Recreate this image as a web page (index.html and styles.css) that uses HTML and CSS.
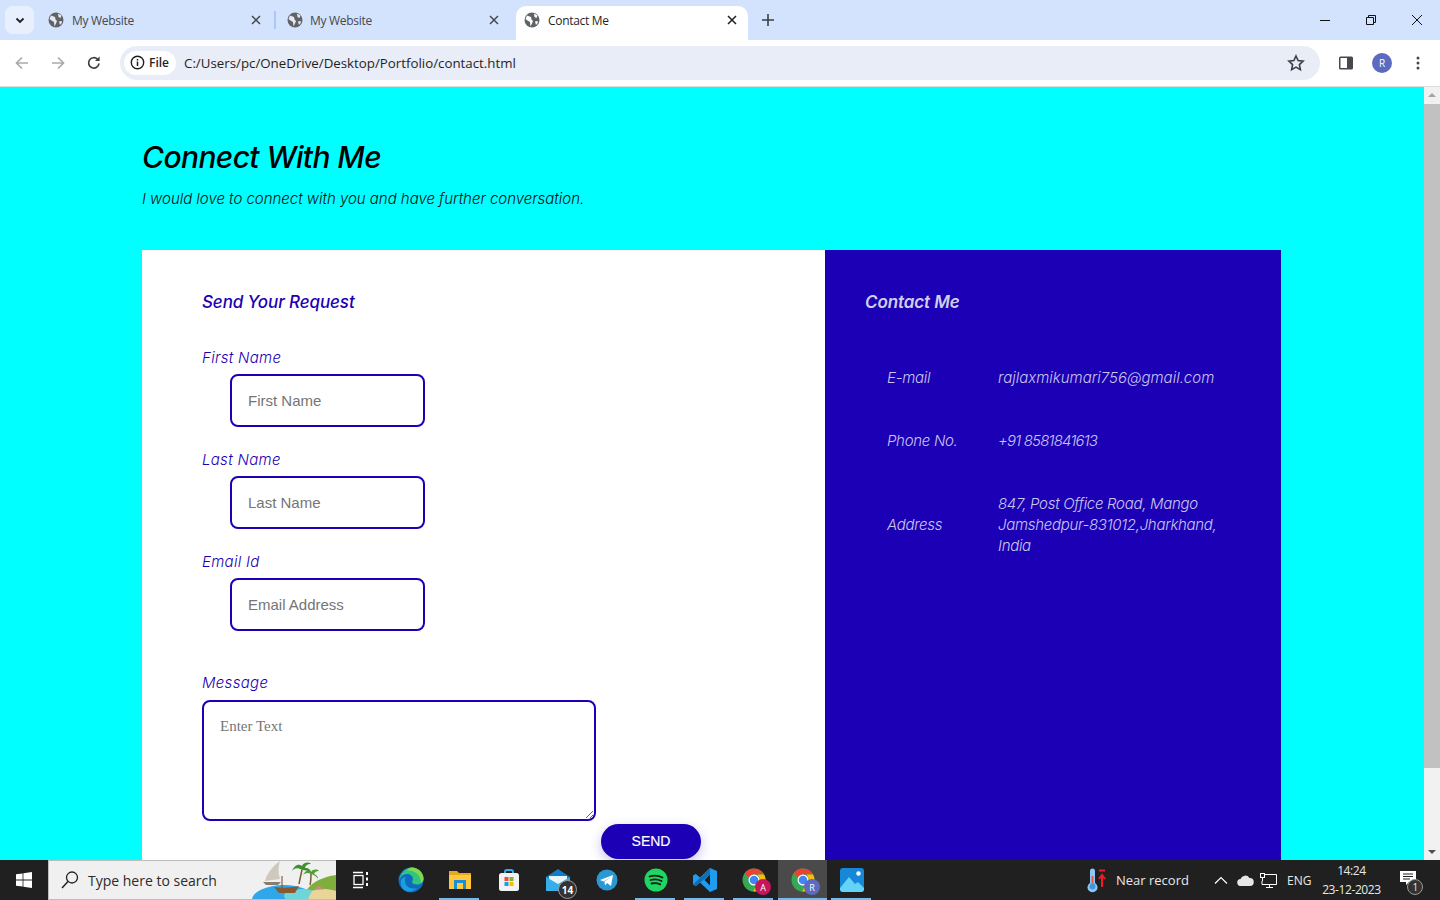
FILE: index.html
```html
<!DOCTYPE html>
<html lang="en">
<head>
    <meta charset="UTF-8">
    <meta name="viewport" content="width=device-width, initial-scale=1.0">
    <title>Contact Me</title>
    <link rel="stylesheet" href="styles.css">
</head>
<body>
    <!-- Tab strip -->
    <div class="tabstrip">
        <div class="tab-search">
            <svg width="12" height="12" viewBox="0 0 12 12"><path d="M2.5 4.5 6 8l3.5-3.5" fill="none" stroke="#1f1f1f" stroke-width="1.8"/></svg>
        </div>
        <div class="tab">
            <svg class="globe" width="16" height="16" viewBox="0 0 16 16"><circle cx="8" cy="8" r="7.5" fill="#5f6368"/><path d="M3 3.5 7 5l.5 2.5L9 9l-1 2.5-1.5 3L6 10 3.5 8.5 1.5 7zM10 1.5l3.5 2-1 2.5-2-1zM11 9.5l2.5-.5.5 1.5-2 2.5z" fill="#e6e9ef"/></svg>
            <span class="tab-title">My Website</span>
            <svg class="tab-x" width="10" height="10" viewBox="0 0 10 10"><path d="M1 1l8 8M9 1l-8 8" stroke="#45484d" stroke-width="1.5"/></svg>
        </div>
        <div class="tab-sep"></div>
        <div class="tab tab-second">
            <svg class="globe" width="16" height="16" viewBox="0 0 16 16"><circle cx="8" cy="8" r="7.5" fill="#5f6368"/><path d="M3 3.5 7 5l.5 2.5L9 9l-1 2.5-1.5 3L6 10 3.5 8.5 1.5 7zM10 1.5l3.5 2-1 2.5-2-1zM11 9.5l2.5-.5.5 1.5-2 2.5z" fill="#e6e9ef"/></svg>
            <span class="tab-title">My Website</span>
            <svg class="tab-x" width="10" height="10" viewBox="0 0 10 10"><path d="M1 1l8 8M9 1l-8 8" stroke="#45484d" stroke-width="1.5"/></svg>
        </div>
        <div class="tab tab-active">
            <svg class="globe" width="16" height="16" viewBox="0 0 16 16"><circle cx="8" cy="8" r="7.5" fill="#5f6368"/><path d="M3 3.5 7 5l.5 2.5L9 9l-1 2.5-1.5 3L6 10 3.5 8.5 1.5 7zM10 1.5l3.5 2-1 2.5-2-1zM11 9.5l2.5-.5.5 1.5-2 2.5z" fill="#fff"/></svg>
            <span class="tab-title">Contact Me</span>
            <svg class="tab-x" width="10" height="10" viewBox="0 0 10 10"><path d="M1 1l8 8M9 1l-8 8" stroke="#1f1f1f" stroke-width="1.5"/></svg>
        </div>
        <svg class="tab-new" width="12" height="12" viewBox="0 0 12 12"><path d="M6 0v12M0 6h12" stroke="#3c4043" stroke-width="1.6"/></svg>
        <div class="win-controls">
            <svg width="46" height="12" viewBox="0 0 46 12"><path d="M18 6.5h10" stroke="#111" stroke-width="1"/></svg>
            <svg width="46" height="12" viewBox="0 0 46 12"><path d="M18.5 3.5h7v7h-7zM20.5 3.5v-2h7v7h-2" fill="none" stroke="#111"/></svg>
            <svg width="46" height="12" viewBox="0 0 46 12"><path d="M18 1l10 10M28 1 18 11" stroke="#111" stroke-width="1"/></svg>
        </div>
    </div>

    <!-- Toolbar -->
    <div class="toolbar">
        <svg class="nav-icon" width="16" height="16" viewBox="0 0 16 16"><path d="M14 8H2.5M8 2.5 2.5 8 8 13.5" fill="none" stroke="#a9abae" stroke-width="1.7"/></svg>
        <svg class="nav-icon" width="16" height="16" viewBox="0 0 16 16"><path d="M2 8h11.5M8 2.5 13.5 8 8 13.5" fill="none" stroke="#a9abae" stroke-width="1.7"/></svg>
        <svg class="nav-icon" width="16" height="16" viewBox="0 0 16 16"><path d="M13 8.5A5.2 5.2 0 1 1 11.5 4.2" fill="none" stroke="#3c4043" stroke-width="1.7"/><path d="M13.6 1.5v4.6H9z" fill="#3c4043"/></svg>
        <div class="omnibox">
            <div class="chip">
                <svg width="15" height="15" viewBox="0 0 15 15"><circle cx="7.5" cy="7.5" r="6.2" fill="none" stroke="#1f1f1f" stroke-width="1.4"/><path d="M7.5 6.5v4.5M7.5 4v1.6" stroke="#1f1f1f" stroke-width="1.5"/></svg>
                <span>File</span>
            </div>
            <span class="url">C:/Users/pc/OneDrive/Desktop/Portfolio/contact.html</span>
            <svg class="star" width="18" height="18" viewBox="0 0 18 18"><path d="m9 2 2.1 4.6 5 .6-3.7 3.4 1 5L9 13.1l-4.4 2.5 1-5L1.900 7.200l5-.6z" fill="none" stroke="#3c4043" stroke-width="1.6"/></svg>
        </div>
        <svg class="side-icon" width="16" height="16" viewBox="0 0 16 16"><rect x="1" y="1.500" width="14" height="13" rx="1.500" fill="#45484d"/><rect x="2.500" y="3" width="6.500" height="10" fill="#fff"/></svg>
        <div class="avatar">R</div>
        <svg class="dots" width="4" height="14" viewBox="0 0 4 14"><circle cx="2" cy="2" r="1.500" fill="#45484d"/><circle cx="2" cy="7" r="1.500" fill="#45484d"/><circle cx="2" cy="12" r="1.500" fill="#45484d"/></svg>
    </div>

    <!-- Page -->
    <div class="viewport">
        <main class="page">
            <h1>Connect With Me</h1>
            <p class="intro">I would love to connect with you and have further conversation.</p>

            <div class="card">
                <section class="form-panel">
                    <h2>Send Your Request</h2>
                    <form>
                        <label for="first">First Name</label>
                        <input id="first" type="text" placeholder="First Name">
                        <label for="last">Last Name</label>
                        <input id="last" type="text" placeholder="Last Name">
                        <label for="email">Email Id</label>
                        <input id="email" type="text" placeholder="Email Address">
                        <label class="message-label" for="message">Message</label>
                        <div class="message-row">
                            <textarea id="message" placeholder="Enter Text"></textarea>
                            <button type="button" class="send">SEND</button>
                        </div>
                    </form>
                </section>
                <aside class="info-panel">
                    <h2>Contact Me</h2>
                    <div class="info-table">
                        <span>E-mail</span>
                        <span class="val-email">rajlaxmikumari756@gmail.com</span>
                        <span>Phone No.</span>
                        <span class="val-phone">+91 8581841613</span>
                        <span>Address</span>
                        <span>847, Post Office Road, Mango<br>Jamshedpur-831012,Jharkhand,<br>India</span>
                    </div>
                </aside>
            </div>
        </main>
        <div class="scrollbar">
            <div class="arrow-up"></div>
            <div class="track"><div class="thumb"></div></div>
            <div class="arrow-down"></div>
        </div>
    </div>

    <!-- Taskbar -->
    <footer class="taskbar">
        <div class="start">
            <svg width="16" height="16" viewBox="0 0 16 16"><path d="M0 2.300 6.600 1.400v6.200H0zM7.400 1.300 16 0v7.600H7.400zM0 8.400h6.600v6.200L0 13.700zM7.400 8.400H16V16l-8.600-1.300z" fill="#fff"/></svg>
        </div>
        <div class="search">
            <svg width="20" height="20" viewBox="0 0 20 20"><circle cx="12" cy="7.500" r="5.500" fill="none" stroke="#222" stroke-width="1.300"/><path d="M8 11.500 2 18" stroke="#222" stroke-width="1.500"/></svg>
            <span>Type here to search</span>
            <svg class="scene" width="84" height="39" viewBox="0 0 84 39">
                <path d="M50 39c4-14 18-22 34-24v24z" fill="#7fae3f"/>
                <ellipse cx="32" cy="40" rx="32" ry="15" fill="#2fa7e8"/>
                <ellipse cx="50" cy="36" rx="18" ry="7" fill="#6ed6d8"/>
                <path d="M60 31c4-2 14-3 24 0v8H56z" fill="#e9d49a"/>
                <path d="M28 1c-7 5-13 12-15 20l15-2c-2-6-2-12 0-18z" fill="#cfc9bd"/>
                <path d="M11 22h18l-3 3H14z" fill="#8a7d6c"/>
                <path d="M30 16v12" stroke="#6b4a2b"/>
                <path d="M22 27c8 1 15 1 25-1l-4 7H27z" fill="#8a5a2e"/>
                <path d="M47 24c1-5 2-10 3-14M58 25c1-4 1-9 1-12" stroke="#7a5a30" stroke-width="1.500" fill="none"/>
                <path d="M50 10c-4-3-8-2-10 1 2-5 6-8 10-5 1-3 6-5 9-2-4 0-5 1-6 4 4 0 6 2 6 5-2-2-5-3-9-3z" fill="#3f8f2f"/>
                <path d="M59 14c-3-2-6-1-8 1 2-4 5-6 8-3 2-3 6-3 8-1-3 0-4 1-5 3 3 1 4 3 4 5-2-3-4-4-7-5z" fill="#4f9f35"/>
                <path d="M62 29l5-3 5 3-1 .5H63z" fill="#c98d7b"/>
            </svg>
        </div>
        <div class="task-icons">
            <div class="task-slot task-view">
                <svg width="18" height="18" viewBox="0 0 18 18" fill="none" stroke="#fff" stroke-width="1.300"><path d="M1 1.500h10M1 16.500h10"/><rect x="2" y="4.500" width="9" height="9"/><path d="M15 1v3M15 6.500v3M15 12v3" stroke-width="2"/></svg>
            </div>
            <div class="task-slot">
                <svg width="26" height="26" viewBox="0 0 26 26"><circle cx="13" cy="13" r="12.500" fill="#0f6cbd"/><path d="M1 14C2 6 8 .5 14 .5c6 0 11.500 5 11.500 11 0 4-3 6-6.500 6-3 0-5-1-5-2.500 0-1 1-1.500 1-3 0-3-3-5-6-5C5 7 2 10 1 14z" fill="#33c481"/><path d="M14 .5c6 0 11.500 5 11.500 11 0 2-1 3.500-2.500 4.500 0-7-5-13-14-12.500C10 2 12 .5 14 .5z" fill="#7ddb4f"/><path d="M7 14c0 5 5 9 12 7-3 3-7 4.500-11 3C4 22.500 2 18 3 13c1-2 3-3 5-3-1 1-1 2.500-1 4z" fill="#1b9de2"/></svg>
            </div>
            <div class="task-slot running">
                <svg width="22" height="20" viewBox="0 0 22 20"><path d="M0 1h8l2 2h12v3H0z" fill="#e8a820"/><rect y="5" width="22" height="14" fill="#ffc83d"/><rect x="5" y="10" width="12" height="9" fill="#1a8fd6"/><rect x="8" y="13" width="6" height="6" fill="#ffc83d"/></svg>
            </div>
            <div class="task-slot">
                <svg width="24" height="24" viewBox="0 0 24 24"><path d="M8 7V4a2 2 0 0 1 2-2h4a2 2 0 0 1 2 2v3" fill="none" stroke="#2fb0ea" stroke-width="2"/><rect x="2" y="5" width="20" height="18" rx="2.500" fill="#f3f3f3"/><rect x="7.500" y="9" width="4" height="4" fill="#e8512b"/><rect x="12.500" y="9" width="4" height="4" fill="#7db72f"/><rect x="7.500" y="14" width="4" height="4" fill="#1ba1e2"/><rect x="12.500" y="14" width="4" height="4" fill="#ffb900"/></svg>
            </div>
            <div class="task-slot">
                <svg width="24" height="22" viewBox="0 0 24 22"><path d="M0 8 12 0l12 8v13H0z" fill="#0f7cc7"/><path d="M3 7h18v7l-9 5-9-5z" fill="#e8f4fb"/><path d="M0 8l12 7 12-7v14H0z" fill="#35aeea"/></svg>
                <span class="count-badge">14</span>
            </div>
            <div class="task-slot">
                <svg width="22" height="22" viewBox="0 0 22 22"><circle cx="11" cy="11" r="10.500" fill="#2a98d4"/><path d="M4 11l13-5-2 11-4-3-2 2.500-.5-4L15 8l-7.500 4.500z" fill="#fff"/></svg>
            </div>
            <div class="task-slot running">
                <svg width="24" height="24" viewBox="0 0 24 24"><circle cx="12" cy="12" r="11.500" fill="#1ed760"/><path d="M5.500 8.500c4.500-1.300 9-1 13 1M6.500 12c4-1 7.500-.8 11 1M7.500 15.500c3-.7 6-.6 8.800.9" fill="none" stroke="#1a1a1a" stroke-width="1.800" stroke-linecap="round"/></svg>
            </div>
            <div class="task-slot running">
                <svg width="24" height="24" viewBox="0 0 24 24"><path d="M17 0 24 3v18l-7 3L7 14.500 2.800 18 0 16.500V7.500L2.800 6 7 9.500zM17 6.500 11.500 12l5.500 5.500z" fill="#1f9cf0"/><path d="M17 0v6.500L3 18l-3-1.500z" fill="#0f6fb8"/></svg>
            </div>
            <div class="task-slot running">
                <svg class="chrome" width="24" height="24" viewBox="0 0 24 24"><circle cx="12" cy="12" r="11.500" fill="#34a853"/><path d="M12 .5A11.500 11.500 0 0 1 22 6.500H12A5.500 5.500 0 0 0 7 9.500L2.500 5.500A11.500 11.500 0 0 1 12 .5z" fill="#ea4335"/><path d="M22 6.500A11.500 11.500 0 0 1 11 23.500l5-9a5.500 5.500 0 0 0-.5-8z" fill="#fbbc04"/><circle cx="12" cy="12" r="5.500" fill="#fff"/><circle cx="12" cy="12" r="4.300" fill="#4285f4"/></svg>
                <span class="profile-badge badge-a">A</span>
            </div>
            <div class="task-slot running active">
                <svg class="chrome" width="24" height="24" viewBox="0 0 24 24"><circle cx="12" cy="12" r="11.500" fill="#34a853"/><path d="M12 .5A11.500 11.500 0 0 1 22 6.500H12A5.500 5.500 0 0 0 7 9.500L2.500 5.500A11.500 11.500 0 0 1 12 .5z" fill="#ea4335"/><path d="M22 6.500A11.500 11.500 0 0 1 11 23.500l5-9a5.500 5.500 0 0 0-.5-8z" fill="#fbbc04"/><circle cx="12" cy="12" r="5.500" fill="#fff"/><circle cx="12" cy="12" r="4.300" fill="#4285f4"/></svg>
                <span class="profile-badge badge-r">R</span>
            </div>
            <div class="task-slot running">
                <svg width="24" height="24" viewBox="0 0 24 24"><rect width="24" height="24" rx="3" fill="#1787d8"/><path d="M0 20 9 9l6 7 3-2 6 6v1a3 3 0 0 1-3 3H3a3 3 0 0 1-3-3z" fill="#63d4f7"/><circle cx="18.500" cy="5.500" r="2.200" fill="#fff"/></svg>
            </div>
        </div>
        <div class="tray">
            <svg class="tray-temp" width="20" height="26" viewBox="0 0 20 26"><path d="M4 4a2.500 2.500 0 0 1 5 0v12a5 5 0 1 1-5 0z" fill="#8ec8f2"/><path d="M6.500 9v9" stroke="#e8554e" stroke-width="2"/><circle cx="6.500" cy="19.500" r="3" fill="#3f97dd"/><path d="M13 3.500h6M16 20V9M13 12l3-4 3 4" fill="none" stroke="#ee1c25" stroke-width="2"/></svg>
            <span class="tray-text">Near record</span>
            <svg class="tray-chev" width="14" height="8" viewBox="0 0 14 8"><path d="M1 7.500l6-6 6 6" fill="none" stroke="#fff" stroke-width="1.200"/></svg>
            <svg class="tray-cloud" width="17" height="11" viewBox="0 0 17 11"><path d="M4 11a3.500 3.500 0 0 1-.5-7A5 5 0 0 1 12.500 3 4 4 0 0 1 13 11z" fill="#e6e6e6"/></svg>
            <svg class="tray-net" width="17" height="15" viewBox="0 0 17 15" fill="none" stroke="#fff"><path d="M4.500 1.500h12v10H2V8"/><path d="M6 14.500h7M9.500 11.500v3"/><rect x=".5" y=".5" width="4" height="4"/><path d="M2.500 4.500V8"/></svg>
            <span class="tray-lang">ENG</span>
            <div class="clock"><span>14:24</span><span>23-12-2023</span></div>
            <div class="notif">
                <svg width="16" height="14" viewBox="0 0 16 14"><path d="M0 0h16v11H9l-3 3v-3H0z" fill="#fff"/><path d="M3 3h10M3 5.500h10M3 8h7" stroke="#202020"/></svg>
                <span class="notif-badge">1</span>
            </div>
        </div>
    </footer>
</body>
</html>
```

FILE: styles.css
```css
/* Global Reset */
* {
    margin: 0;
    padding: 0;
    box-sizing: border-box;
}

body {
    width: 1440px;
    height: 900px;
    overflow: hidden;
    display: flex;
    flex-direction: column;
    font-family: 'Open Sans', 'Noto Sans', sans-serif;
    background: #fff;
}

/* Tab strip */
.tabstrip {
    height: 40px;
    background: #d3e3fd;
    display: flex;
    align-items: flex-end;
    position: relative;
    flex-shrink: 0;
}

.tab-search {
    width: 29px;
    height: 28px;
    margin: 0 0 6px 5px;
    border-radius: 8px;
    background: #e8f0fe;
    display: flex;
    align-items: center;
    justify-content: center;
}

.tab {
    width: 232px;
    height: 34px;
    display: flex;
    align-items: center;
    padding: 0 5px 6px 14px;
    font-size: 12px;
    letter-spacing: -0.3px;
    color: #45484d;
}

.tab-second {
    padding-left: 11px;
    width: 240px;
    padding-right: 17px;
}

.tab-second .tab-title {
    margin-left: 7px;
}

.tab-title {
    margin-left: 8px;
    flex: 1;
}

.tab-x {
    flex-shrink: 0;
}

.tab-sep {
    width: 2px;
    height: 18px;
    margin: 0 0 11px 8px;
    background: #a8c7fa;
}

.tab-active {
    background: #fff;
    border-radius: 10px 10px 0 0;
    padding: 0 11px 6px 8px;
    color: #1f1f1f;
}

.tab-new {
    margin: 0 0 14px 14px;
}

.win-controls {
    margin-left: auto;
    display: flex;
    align-self: flex-start;
    padding-top: 14px;
}

/* Toolbar */
.toolbar {
    height: 47px;
    padding: 6px 0 7px;
    background: #fff;
    border-bottom: 1px solid #dadce0;
    border-radius: 10px 10px 0 0;
    display: flex;
    align-items: center;
    flex-shrink: 0;
}

.nav-icon {
    margin-left: 20px;
}

.nav-icon:first-child {
    margin-left: 14px;
}

.omnibox {
    width: 1200px;
    height: 34px;
    margin-left: 18px;
    border-radius: 17px;
    background: #e9edf7;
    display: flex;
    align-items: center;
    padding-left: 4px;
    padding-right: 15px;
    font-size: 13.3px;
    color: #1f1f1f;
}

.chip {
    width: 52px;
    height: 24px;
    border-radius: 12px;
    background: #fff;
    display: flex;
    align-items: center;
    gap: 4px;
    padding-left: 6px;
    font-size: 12px;
    font-weight: 600;
}

.url {
    margin-left: 8px;
    flex: 1;
}

.side-icon {
    margin-left: 18px;
}

.avatar {
    width: 20px;
    height: 20px;
    margin-left: 18px;
    border-radius: 50%;
    background: #5c6bc0;
    color: #fff;
    font-size: 10px;
    display: flex;
    align-items: center;
    justify-content: center;
}

.dots {
    margin-left: 24px;
}

/* Page viewport */
.viewport {
    flex: 1;
    min-height: 0;
    display: flex;
}

.page {
    width: 1424px;
    height: 773px;
    background: #00ffff;
    padding: 49px 0 0 142px;
    overflow: hidden;
    font-style: italic;
}

h1 {
    font-size: 30px;
    line-height: 42px;
    font-weight: 500;
    font-family: 'Inter', sans-serif;
    letter-spacing: -0.6px;
    color: #000;
}

.intro {
    margin-top: 10px;
    font-size: 15px;
    line-height: 22px;
    font-family: 'Inter', sans-serif;
    font-weight: 300;
    color: #111;
    letter-spacing: -0.03px;
}

.card {
    width: 1139px;
    height: 700px;
    margin-top: 40px;
    display: flex;
    font-family: 'Inter', sans-serif;
}

/* Form panel */
.form-panel {
    width: 683px;
    background: #fff;
    padding: 40px 0 0 60px;
    color: #1c00b5;
}

h2 {
    font-size: 17px;
    line-height: 24px;
    font-weight: 500;
    letter-spacing: -0.1px;
}

form {
    margin-top: 33px;
}

label {
    display: block;
    font-size: 15px;
    line-height: 22px;
    font-weight: 300;
    letter-spacing: 0.3px;
}

input {
    display: block;
    width: 195px;
    height: 53px;
    margin: 5px 0 22px 28px;
    padding: 0 16px;
    border: 2px solid #1c00b5;
    border-radius: 8px;
    font-family: 'Liberation Sans', Arial, sans-serif;
    font-size: 15px;
    outline: none;
}

.message-label {
    margin-top: 41px;
}

.message-row {
    display: flex;
    align-items: flex-start;
    margin-top: 6px;
}

textarea {
    display: block;
    width: 394px;
    height: 121px;
    padding: 16px;
    border: 2px solid #1c00b5;
    border-radius: 8px;
    font-family: 'Liberation Serif', 'Times New Roman', serif;
    font-size: 15px;
    outline: none;
}

.send {
    width: 100px;
    height: 35px;
    margin: 124px 0 0 5px;
    padding-bottom: 1px;
    border: none;
    border-radius: 18px;
    background: #1c00b5;
    color: #fff;
    font-family: 'Liberation Sans', Arial, sans-serif;
    font-size: 14px;
    -webkit-text-stroke: 0.15px #fff;
    box-shadow: 0 4px 12px rgba(28, 0, 181, 0.25);
}

/* Contact panel */
.info-panel {
    width: 456px;
    background: #1c00b5;
    padding: 40px 0 0 40px;
    color: #c9c5ef;
}

.info-panel h2 {
    font-weight: 600;
    color: #d0cfe8;
}

.info-table {
    margin: 53px 0 0 22px;
    display: grid;
    grid-template-columns: 111px 1fr;
    row-gap: 42px;
    align-items: center;
    font-size: 15px;
    line-height: 21px;
    font-weight: 300;
    letter-spacing: -0.3px;
}

.val-email {
    letter-spacing: 0;
}

.val-phone {
    letter-spacing: -0.8px;
}

/* Scrollbar */
.scrollbar {
    width: 16px;
    background: #f1f1f1;
    display: flex;
    flex-direction: column;
    align-items: center;
}

.arrow-up,
.arrow-down {
    width: 0;
    height: 0;
    border-left: 4px solid transparent;
    border-right: 4px solid transparent;
}

.arrow-up {
    margin-top: 6px;
    border-bottom: 4px solid #a3a3a3;
}

.arrow-down {
    margin-bottom: 6px;
    border-top: 4px solid #505050;
}

.track {
    flex: 1;
    width: 100%;
    padding-top: 7px;
}

.thumb {
    height: 664px;
    background: #c1c1c1;
}

/* Taskbar */
.taskbar {
    height: 40px;
    background: #202020;
    display: flex;
    flex-shrink: 0;
    color: #fff;
    font-family: 'Open Sans', sans-serif;
}

.start {
    width: 48px;
    display: flex;
    align-items: center;
    justify-content: center;
}

.search {
    width: 288px;
    background: #f0f0f0;
    border: 1px solid #bdbdbd;
    border-width: 1px 0 1px 1px;
    display: flex;
    align-items: center;
    padding-left: 11px;
    color: #2b2b2b;
    font-size: 14px;
    position: relative;
    overflow: hidden;
}

.search span {
    margin-left: 8px;
}

.scene {
    position: absolute;
    right: 0;
    bottom: 0;
}

.task-icons {
    display: flex;
}

.task-slot {
    width: 49px;
    height: 40px;
    display: flex;
    align-items: center;
    justify-content: center;
    position: relative;
}

.task-view {
    margin-right: 1px;
}

.running::after {
    content: "";
    position: absolute;
    left: 4px;
    right: 5px;
    bottom: 0;
    height: 2px;
    background: #76b9ed;
}

.active {
    background: #4a4a4a;
}

.active::after {
    left: 0;
    right: 0;
}

.count-badge {
    position: absolute;
    left: 25px;
    top: 20px;
    width: 19px;
    height: 19px;
    border-radius: 50%;
    background: #333;
    border: 1px solid #999;
    font-size: 10px;
    font-weight: 700;
    display: flex;
    align-items: center;
    justify-content: center;
}

.profile-badge {
    position: absolute;
    left: 26px;
    top: 19px;
    width: 16px;
    height: 16px;
    border-radius: 50%;
    font-size: 9px;
    display: flex;
    align-items: center;
    justify-content: center;
}

.badge-a {
    background: #c2185b;
}

.badge-r {
    background: #5c6bc0;
}

.tray {
    flex: 1;
    display: flex;
    align-items: center;
    font-size: 13px;
    color: #e8e8e8;
}

.tray-temp {
    margin-left: 210px;
}

.tray-text {
    margin-left: 10px;
    width: 74px;
    white-space: nowrap;
}

.tray-chev {
    margin-left: 24px;
}

.tray-cloud {
    margin-left: 9px;
}

.tray-net {
    margin-left: 6px;
}

.tray-lang {
    margin-left: 10px;
    font-size: 12px;
}

.clock {
    width: 62px;
    margin-left: 9px;
    display: flex;
    flex-direction: column;
    align-items: center;
    font-size: 12px;
    letter-spacing: -0.4px;
    line-height: 19px;
    white-space: nowrap;
}

.notif {
    margin-left: 18px;
    position: relative;
    height: 30px;
    padding-top: 6px;
}

.notif-badge {
    position: absolute;
    left: 7px;
    top: 14px;
    width: 16px;
    height: 16px;
    border-radius: 50%;
    background: #333;
    border: 1px solid #999;
    font-size: 10px;
    display: flex;
    align-items: center;
    justify-content: center;
}
```
